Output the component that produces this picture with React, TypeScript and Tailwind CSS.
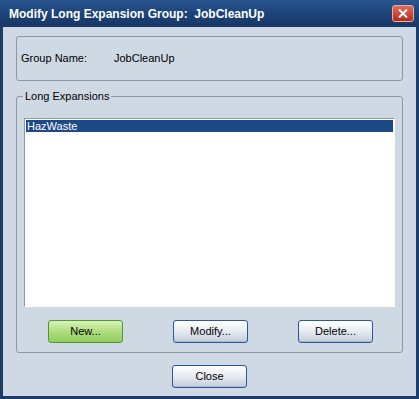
import React from "react";

const btn =
  "h-[23px] w-[75px] rounded-[3px] border border-[#2c55a8] bg-gradient-to-b from-[#ffffff] via-[#e6ebf2] to-[#c3ccd8] text-[11px] text-black shadow-[inset_0_-1px_0_#b0bccb]";

export default function App() {
  return (
    <div
      className="flex h-[399px] w-[419px] flex-col bg-[#1c3d69]"
      style={{ fontFamily: '"Liberation Sans", Arial, sans-serif' }}
    >
      {/* title bar */}
      <div className="flex h-[27px] items-center justify-between bg-gradient-to-b from-[#2a5690] via-[#1d4379] to-[#183865] pl-[9px] pr-[5px]">
        <span className="text-[12px] font-bold text-white whitespace-pre">
          Modify Long Expansion Group:  JobCleanUp
        </span>
        <button className="flex h-[17px] w-[22px] items-center justify-center rounded-[3px] border border-[#e6b0a8] bg-gradient-to-b from-[#e06a5a] to-[#b82818]">
          <svg width="10" height="9" viewBox="0 0 10 9">
            <path d="M1 0.5 L9 8.5 M9 0.5 L1 8.5" stroke="#fff" strokeWidth="2" />
          </svg>
        </button>
      </div>

      {/* client */}
      <div className="mx-[3px] mb-[3px] flex flex-1 flex-col bg-[#cfd9e4] px-[13px] pt-[9px]">
        <div className="flex h-[45px] items-center rounded-[3px] border border-[#8a98a8] px-[4px] text-[11px] text-black">
          <span className="w-[93px]">Group Name:</span>
          <span>JobCleanUp</span>
        </div>

        <div className="relative mt-[15px] flex h-[257px] flex-col rounded-[3px] border border-[#8a98a8] px-[7px] pt-[21px]">
          <span className="absolute left-[6px] top-[-8px] bg-[#cfd9e4] px-[2px] text-[11px] leading-[14px] text-black">
            Long Expansions
          </span>
          <div className="h-[189px] border-l border-t border-[#8a98a8] border-b-white border-r-white border-b border-r bg-white px-[1px] pt-[1px]">
            <div className="h-[12px] bg-[#1b4a86] pl-[1px] text-[11px] leading-[12px] text-white">
              HazWaste
            </div>
          </div>
          <div className="mt-[13px] flex gap-[50px] pl-[24px]">
            <button className="h-[23px] w-[75px] rounded-[3px] border border-[#4f9a2f] bg-gradient-to-b from-[#d8f2b8] via-[#aedd7f] to-[#8fcd5e] text-[11px] text-black">
              New...
            </button>
            <button className={btn}>Modify...</button>
            <button className={btn}>Delete...</button>
          </div>
        </div>

        <div className="mt-[12px] flex justify-center">
          <button className={btn}>Close</button>
        </div>
      </div>
    </div>
  );
}
